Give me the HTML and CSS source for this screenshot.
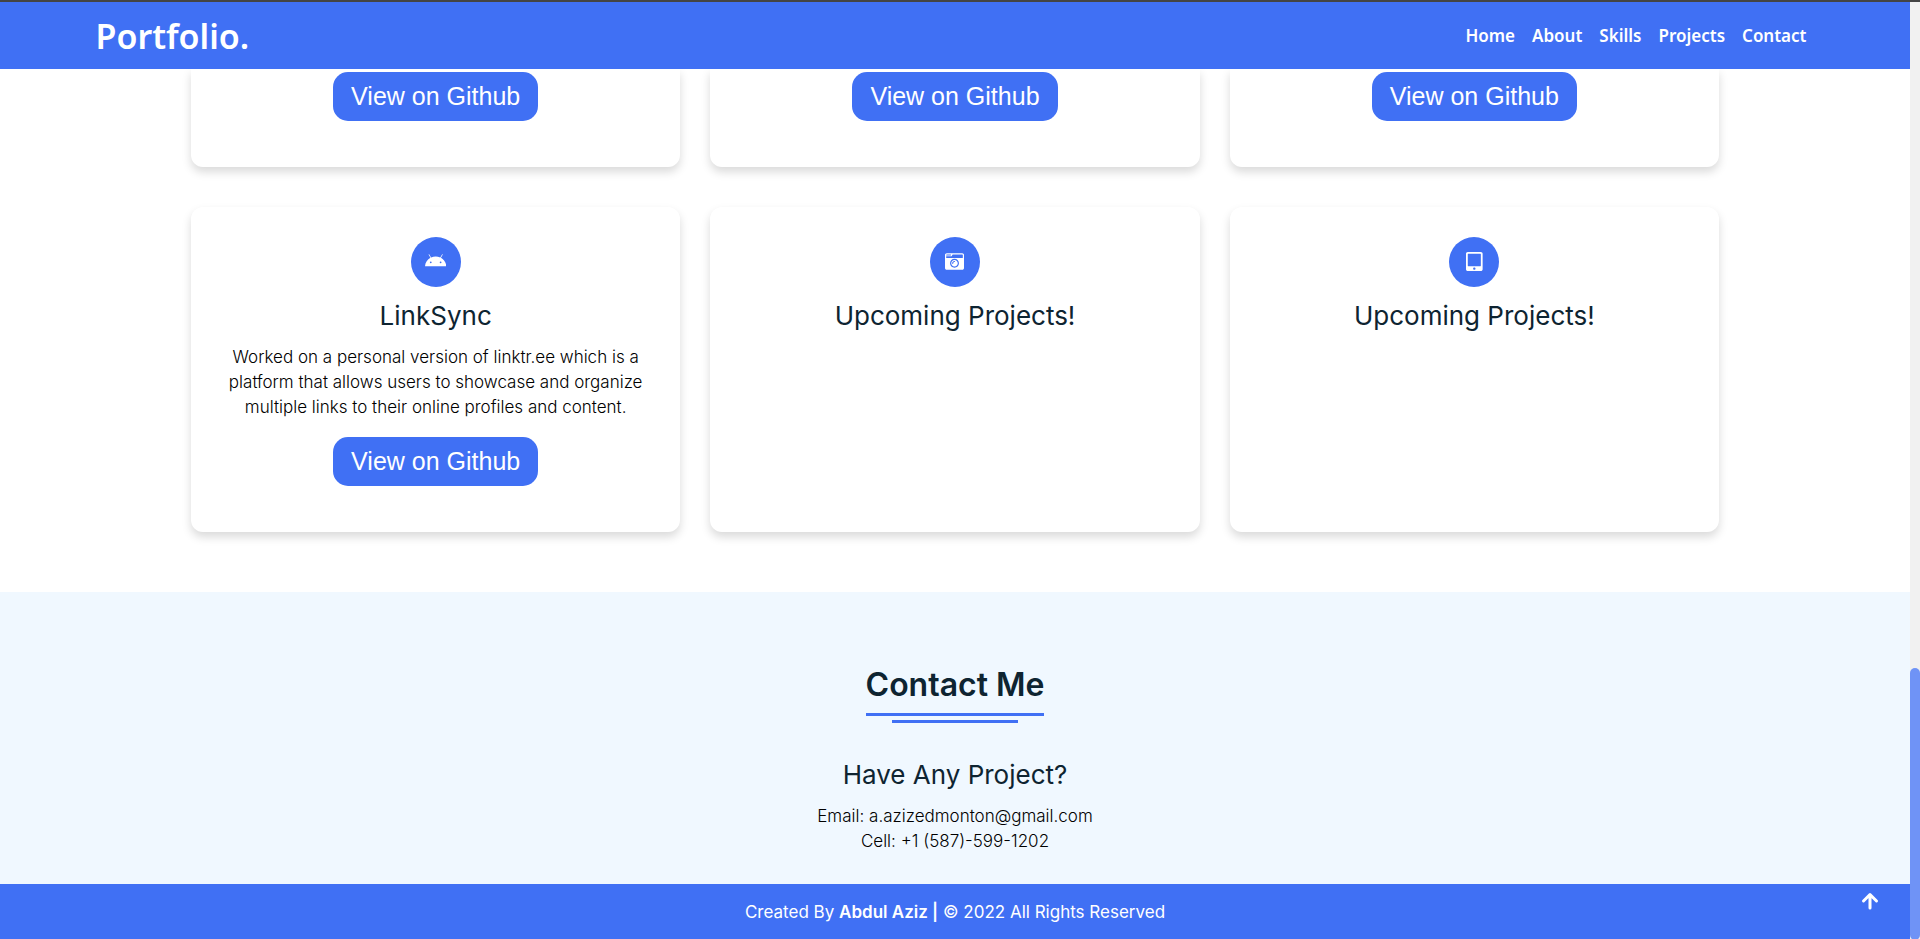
FILE: index.html
```html
<!DOCTYPE html>
<html lang="en">
<head>
<meta charset="utf-8">
<meta name="viewport" content="width=device-width, initial-scale=1">
<title>Portfolio</title>
<link rel="stylesheet" href="styles.css">
</head>
<body>
<div class="page">
  <header class="navbar">
    <a class="logo" href="#home">Portfolio.</a>
    <nav class="menu" aria-label="Main">
      <a href="#home">Home</a>
      <a href="#about">About</a>
      <a href="#skills">Skills</a>
      <a href="#projects">Projects</a>
      <a href="#contact">Contact</a>
    </nav>
  </header>
  <main>
    <section class="projects" id="projects">
      <article class="card card-continued"><button class="btn" type="button">View on Github</button></article>
      <article class="card card-continued"><button class="btn" type="button">View on Github</button></article>
      <article class="card card-continued"><button class="btn" type="button">View on Github</button></article>
      <article class="card">
        <span class="badge"><svg class="icon" viewBox="0 0 576 512" aria-hidden="true"><path d="M420.55,301.93a24,24,0,1,1,24-24,24,24,0,0,1-24,24m-265.1,0a24,24,0,1,1,24-24,24,24,0,0,1-24,24m273.7-144.48,47.94-83a10,10,0,1,0-17.27-10h0l-48.54,84.07a301.25,301.25,0,0,0-246.56,0L116.18,64.45a10,10,0,1,0-17.27,10h0l47.94,83C64.53,202.22,8.24,285.55,0,384H576c-8.24-98.45-64.54-181.78-146.85-226.55"/></svg></span>
        <h3 class="title">LinkSync</h3>
        <p class="text">Worked on a personal version of linktr.ee which is a platform that allows users to showcase and organize multiple links to their online profiles and content.</p>
        <button class="btn" type="button">View on Github</button>
      </article>
      <article class="card">
        <span class="badge"><svg class="icon" viewBox="0 0 512 512" aria-hidden="true"><path d="M48 32C21.5 32 0 53.5 0 80v352c0 26.5 21.5 48 48 48h416c26.5 0 48-21.5 48-48V80c0-26.5-21.5-48-48-48H48zm0 32h106c3.3 0 6 2.7 6 6v20c0 3.3-2.7 6-6 6H38c-3.3 0-6-2.7-6-6V80c0-8.8 7.2-16 16-16zm426 96H38c-3.3 0-6-2.7-6-6v-36c0-3.3 2.7-6 6-6h138l30.2-45.3c1.1-1.7 3-2.7 5-2.7H464c8.8 0 16 7.2 16 16v74c0 3.3-2.7 6-6 6zM256 424c-66.2 0-120-53.8-120-120s53.8-120 120-120 120 53.8 120 120-53.8 120-120 120zm0-208c-48.5 0-88 39.5-88 88s39.5 88 88 88 88-39.5 88-88-39.5-88-88-88zm-48 104c-8.8 0-16-7.2-16-16 0-35.3 28.7-64 64-64 8.8 0 16 7.2 16 16s-7.2 16-16 16c-17.6 0-32 14.4-32 32 0 8.8-7.2 16-16 16z"/></svg></span>
        <h3 class="title">Upcoming Projects!</h3>
      </article>
      <article class="card">
        <span class="badge"><svg class="icon" viewBox="0 0 448 512" aria-hidden="true"><path d="M400 0H48C21.5 0 0 21.5 0 48v416c0 26.5 21.5 48 48 48h352c26.5 0 48-21.5 48-48V48c0-26.5-21.5-48-48-48zM224 480c-17.7 0-32-14.3-32-32s14.3-32 32-32 32 14.3 32 32-14.3 32-32 32zm176-108c0 6.6-5.4 12-12 12H60c-6.6 0-12-5.4-12-12V60c0-6.6 5.4-12 12-12h328c6.6 0 12 5.4 12 12v312z"/></svg></span>
        <h3 class="title">Upcoming Projects!</h3>
      </article>
    </section>
    <section class="contact" id="contact">
      <h2 class="heading">Contact Me</h2>
      <h3 class="title">Have Any Project?</h3>
      <p class="text">Email: a.azizedmonton@gmail.com</p>
      <p class="text">Cell: +1 (587)-599-1202</p>
    </section>
  </main>
  <footer class="footer">
    <p class="credit">Created By <b>Abdul Aziz |</b> © 2022 All Rights Reserved</p>
    <a class="to-top" href="#home" aria-label="Back to top"><svg viewBox="0 0 18 18" aria-hidden="true"><path d="M9 16V3M2.5 9L9 2.5L15.5 9"/></svg></a>
  </footer>
</div>
<div class="scroll-track" aria-hidden="true"><div class="scroll-thumb"></div></div>
</body>
</html>
```
FILE: styles.css
```css
:root {
  --blue: #4070f4;
  --ink: #0e2431;
  --heading-font: "Noto Sans", "Open Sans", sans-serif;
  --body-font: Inter, "Open Sans", sans-serif;
}

* {
  box-sizing: border-box;
  margin: 0;
  padding: 0;
}

body {
  display: grid;
  grid-template-columns: 1fr 10px;
  min-height: 100vh;
  border-top: 2px solid #444;
  background: #fff;
  font-family: var(--body-font);
  color: #000;
}

a {
  color: inherit;
  text-decoration: none;
}

.page {
  display: flex;
  flex-direction: column;
}

.navbar {
  position: sticky;
  top: 0;
  z-index: 1;
  display: flex;
  align-items: center;
  justify-content: space-between;
  height: 67px;
  padding: 0 5%;
  background: var(--blue);
  color: #fff;
  font-family: var(--heading-font);
}

.logo {
  font-size: 34px;
  font-weight: 600;
}

.menu {
  display: flex;
  gap: 17px;
  padding-right: 8px;
  font-size: 17px;
  font-weight: 600;
}

.projects {
  display: grid;
  grid-template-columns: repeat(3, 1fr);
  gap: 40px 30px;
  padding: 0 10% 60px;
}

.card {
  display: flex;
  flex-direction: column;
  align-items: center;
  padding: 30px 30px 46px;
  border-radius: 12px;
  background: #fff;
  box-shadow: 0 5px 10px rgba(0, 0, 0, 0.15);
  text-align: center;
}

.card-continued {
  padding-top: 3px;
  border-radius: 0 0 12px 12px;
}

.badge {
  display: flex;
  align-items: center;
  justify-content: center;
  width: 50px;
  height: 50px;
  border-radius: 50%;
  background: var(--blue);
}

.icon {
  height: 19px;
  margin-bottom: 1px;
  fill: #fff;
}

.title {
  margin: 10px 0;
  color: var(--ink);
  font-size: 26px;
  font-weight: 400;
  line-height: 38px;
}

.text {
  font-size: 17px;
  font-weight: 300;
  line-height: 25px;
}

.btn {
  height: 49px;
  padding: 0 18px;
  border: 0;
  border-radius: 15px;
  background: var(--blue);
  color: #fff;
  font-family: "Liberation Sans", Arial, sans-serif;
  font-size: 25px;
}

.text + .btn {
  margin-top: 17px;
}

.contact {
  display: flex;
  flex-direction: column;
  align-items: center;
  padding: 70px 20px 30px;
  background: #f0f8ff;
}

.heading {
  position: relative;
  margin-bottom: 30px;
  padding-bottom: 6px;
  border-bottom: 3px solid var(--blue);
  color: var(--ink);
  font-size: 32px;
  font-weight: 600;
  line-height: 45px;
}

.heading::after {
  content: "";
  position: absolute;
  top: 100%;
  left: 15%;
  width: 70%;
  height: 3px;
  margin-top: 7px;
  background: var(--blue);
}

.footer {
  position: relative;
  display: flex;
  flex: 1;
  align-items: center;
  justify-content: center;
  min-height: 56px;
  background: var(--blue);
  color: #fff;
}

.credit {
  font-size: 17px;
  font-weight: 400;
}

.credit b {
  font-weight: 600;
}

.to-top {
  position: absolute;
  top: 8px;
  right: 31px;
  width: 18px;
  height: 18px;
}

.to-top svg {
  display: block;
  fill: none;
  stroke: #fff;
  stroke-width: 3;
  stroke-linecap: round;
  stroke-linejoin: round;
}

.scroll-track {
  display: flex;
  align-items: flex-end;
  background: #f1f1f1;
}

.scroll-thumb {
  width: 100%;
  height: 29%;
  border-radius: 5px;
  background: #6f93f6;
}
```
